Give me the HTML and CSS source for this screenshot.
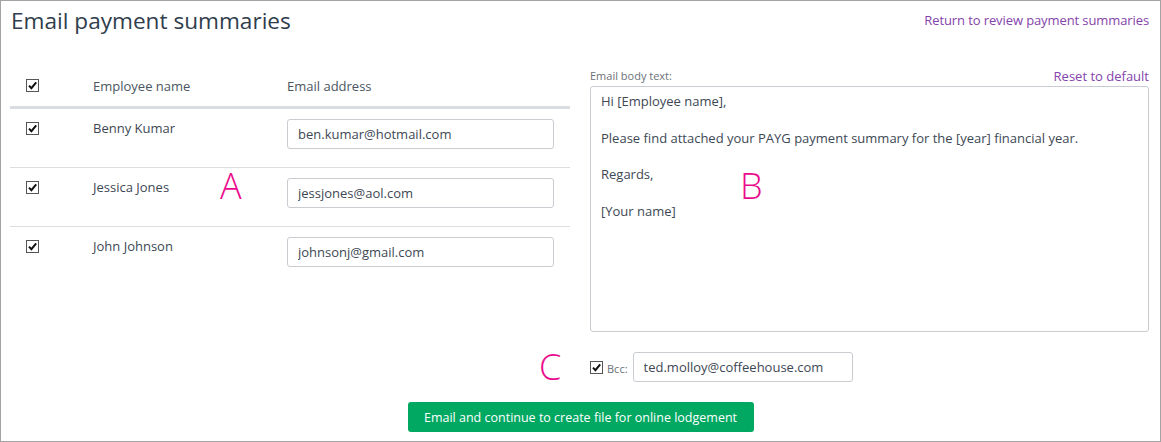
FILE: index.html
```html
<!DOCTYPE html>
<html lang="en">
<head>
<meta charset="utf-8">
<title>Email payment summaries</title>
<link rel="stylesheet" href="styles.css">
</head>
<body>
<div class="frame">
  <header class="top">
    <h1 class="title">Email payment summaries</h1>
    <a class="link return" href="#">Return to review payment summaries</a>
  </header>

  <div class="main">
    <section class="left">
      <div class="row head">
        <div class="c-check"><span class="cb"><svg viewBox="0 0 13 13" width="13" height="13"><rect x="0.5" y="0.5" width="12" height="12" fill="#fff" stroke="#555"/><path d="M3 6.6 L5.4 9.2 L10.2 3.4" fill="none" stroke="#111" stroke-width="2"/></svg></span></div>
        <div class="c-name">Employee name</div>
        <div class="c-email">Email address</div>
      </div>
      <div class="row">
        <div class="c-check"><span class="cb"><svg viewBox="0 0 13 13" width="13" height="13"><rect x="0.5" y="0.5" width="12" height="12" fill="#fff" stroke="#555"/><path d="M3 6.6 L5.4 9.2 L10.2 3.4" fill="none" stroke="#111" stroke-width="2"/></svg></span></div>
        <div class="c-name">Benny Kumar</div>
        <div class="c-email"><input class="field" type="text" value="ben.kumar@hotmail.com"></div>
      </div>
      <div class="row">
        <div class="c-check"><span class="cb"><svg viewBox="0 0 13 13" width="13" height="13"><rect x="0.5" y="0.5" width="12" height="12" fill="#fff" stroke="#555"/><path d="M3 6.6 L5.4 9.2 L10.2 3.4" fill="none" stroke="#111" stroke-width="2"/></svg></span></div>
        <div class="c-name">Jessica Jones</div>
        <div class="c-email"><input class="field" type="text" value="jessjones@aol.com"></div>
      </div>
      <div class="row last">
        <div class="c-check"><span class="cb"><svg viewBox="0 0 13 13" width="13" height="13"><rect x="0.5" y="0.5" width="12" height="12" fill="#fff" stroke="#555"/><path d="M3 6.6 L5.4 9.2 L10.2 3.4" fill="none" stroke="#111" stroke-width="2"/></svg></span></div>
        <div class="c-name">John Johnson</div>
        <div class="c-email"><input class="field" type="text" value="johnsonj@gmail.com"></div>
      </div>
      <span class="note note-a">A</span>
    </section>

    <section class="right">
      <div class="label-row">
        <span class="label">Email body text:</span>
        <a class="link" href="#">Reset to default</a>
      </div>
      <div class="body-text">
        <p>Hi [Employee name],</p>
        <p>Please find attached your PAYG payment summary for the [year] financial year.</p>
        <p>Regards,</p>
        <p>[Your name]</p>
      </div>
      <div class="bcc-row">
        <span class="cb"><svg viewBox="0 0 13 13" width="13" height="13"><rect x="0.5" y="0.5" width="12" height="12" fill="#fff" stroke="#555"/><path d="M3 6.6 L5.4 9.2 L10.2 3.4" fill="none" stroke="#111" stroke-width="2"/></svg></span>
        <span class="label bcc-label">Bcc:</span>
        <input class="field bcc-field" type="text" value="ted.molloy@coffeehouse.com">
      </div>
      <span class="note note-b">B</span>
      <span class="note note-c">C</span>
    </section>
  </div>

  <div class="actions">
    <button class="btn" type="button">Email and continue to create file for online lodgement</button>
  </div>
</div>
</body>
</html>
```

FILE: styles.css
```css
* { box-sizing: border-box; }

html, body {
  margin: 0;
  padding: 0;
  background: #fff;
}

body {
  font-family: "Open Sans", "Liberation Sans", sans-serif;
  font-size: 13px;
  color: #3d4854;
}

.frame {
  width: 1161px;
  height: 442px;
  border: 1px solid #a3a3a3;
  padding: 0 11px 0 9px;
}

.top {
  display: flex;
  justify-content: space-between;
  align-items: flex-start;
  height: 61px;
}

.title {
  margin: 6px 0 0 1px;
  font-size: 22.6px;
  line-height: 28px;
  font-weight: 400;
  color: #2f3d4c;
}

.link {
  color: #8543ab;
  text-decoration: none;
  font-size: 13px;
  line-height: 18px;
}

.return {
  margin-top: 10px;
  letter-spacing: -0.1px;
}

.main {
  display: grid;
  grid-template-columns: 560px 559px;
  column-gap: 20px;
}

.left, .right {
  position: relative;
}

.row {
  display: grid;
  grid-template-columns: 83px 194px 1fr;
  height: 59px;
  padding-top: 10px;
  border-bottom: 1px solid #dcdfe2;
  line-height: 18px;
}

.row.last {
  border-bottom: none;
}

.row.head {
  height: 47px;
  padding-top: 15px;
  border-bottom: 3px solid #d9dde1;
  color: #4a5561;
}

.c-check {
  padding-left: 16px;
  padding-top: 2px;
}

.row.head .c-check {
  padding-top: 1px;
}

.cb {
  display: inline-block;
  width: 13px;
  height: 13px;
  line-height: 0;
}

.cb svg {
  display: block;
}

.c-name {
  color: #3d4854;
}

.row.head .c-name {
  color: #4a5561;
}

.field {
  display: block;
  width: 267px;
  height: 30px;
  border: 1px solid #c8ccd1;
  border-radius: 3px;
  padding: 0 10px;
  font-family: inherit;
  font-size: 13px;
  color: #3d4854;
  background: #fff;
  outline: none;
}

.label-row {
  display: flex;
  justify-content: space-between;
  align-items: center;
  height: 24px;
  padding-top: 3px;
}

.label {
  font-size: 11px;
  color: #6b7278;
}

.body-text {
  height: 246px;
  margin-top: 0;
  border: 1px solid #c8ccd1;
  border-radius: 3px;
  padding: 5px 10px;
  line-height: 18.3px;
  color: #3d4854;
}

.body-text p {
  margin: 0 0 18.3px;
}

.bcc-row {
  display: flex;
  align-items: center;
  margin-top: 20px;
  height: 30px;
}

.bcc-row .cb {
  margin: 1px 0 0 0;
}

.bcc-label {
  margin: 3px 5px 0 4px;
}

.bcc-field {
  width: 220px;
}

.note {
  position: absolute;
  font-size: 36px;
  line-height: 1;
  font-weight: 300;
  color: #ec0a8c;
}

.note-a {
  left: 210px;
  top: 106px;
}

.note-b {
  left: 150px;
  top: 106px;
}

.note-c {
  left: -51px;
  top: 287px;
}

.actions {
  display: flex;
  justify-content: center;
  margin-top: 20px;
  padding-left: 2px;
}

.btn {
  height: 30px;
  width: 346px;
  border: none;
  border-radius: 3px;
  background: #00a862;
  color: #fff;
  font-family: inherit;
  font-size: 12.5px;
  padding: 0;
}
```
